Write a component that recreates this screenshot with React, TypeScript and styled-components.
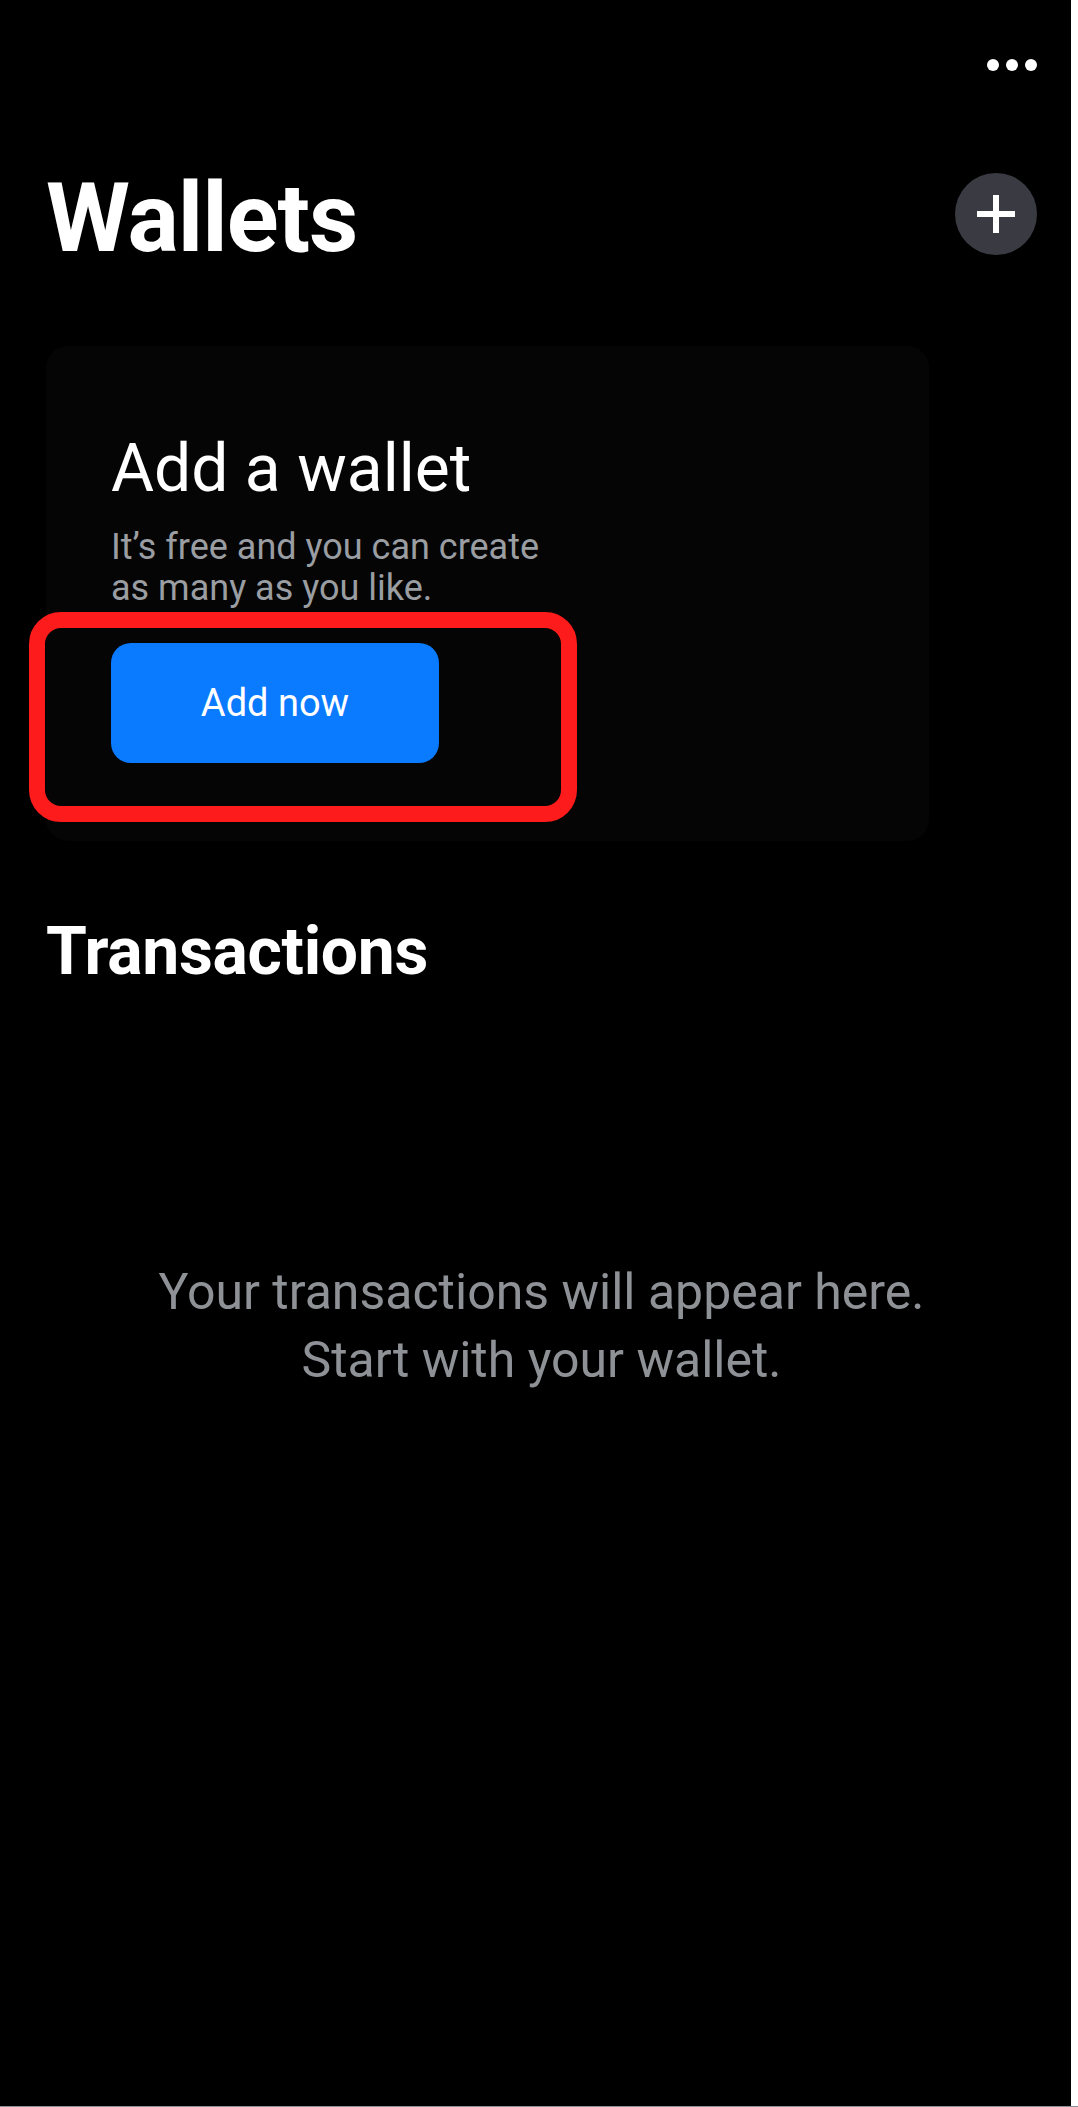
import React from "react";
import styled, { createGlobalStyle } from "styled-components";

const GlobalStyle = createGlobalStyle`
  html, body {
    margin: 0;
    padding: 0;
    background: #ffffff;
  }
  * { box-sizing: border-box; }
  body {
    font-family: Roboto, "Liberation Sans", Arial, sans-serif;
    -webkit-font-smoothing: antialiased;
  }
`;

const Frame = styled.div`
  display: flex;
  width: 1078px;
  border-bottom: 1px solid #8c9197;
`;

const Screen = styled.main`
  width: 1071px;
  min-height: 2106px;
  background: #000000;
  color: #ffffff;
  padding: 0 34px 0 46px;
  display: flex;
  flex-direction: column;
`;

const Side = styled.div`
  flex: 1;
  background: #ffffff;
`;

const TopBar = styled.div`
  height: 130px;
  display: flex;
  align-items: center;
  justify-content: flex-end;
`;

const MoreButton = styled.button`
  background: none;
  border: 0;
  padding: 0;
  display: flex;
  gap: 7px;
  cursor: pointer;
`;

const Dot = styled.span`
  width: 12px;
  height: 12px;
  border-radius: 50%;
  background: #ffffff;
`;

const HeaderRow = styled.div`
  margin-top: 40px;
  display: flex;
  align-items: flex-start;
  justify-content: space-between;
`;

const PageTitle = styled.h1`
  margin: 0;
  font-size: 96px;
  line-height: 96px;
  font-weight: 700;
  letter-spacing: -1px;
`;

const AddCircle = styled.button`
  margin-top: 3px;
  width: 82px;
  height: 82px;
  border-radius: 50%;
  border: 0;
  background: #3a3b42;
  display: flex;
  align-items: center;
  justify-content: center;
  padding: 0;
  cursor: pointer;
`;

const Card = styled.section`
  margin-top: 80px;
  width: 883px;
  background: #050505;
  border-radius: 22px;
  padding: 83px 0 78px 65px;
  display: flex;
  flex-direction: column;
  align-items: flex-start;
`;

const CardTitle = styled.h2`
  margin: 0;
  font-size: 66px;
  line-height: 80px;
  font-weight: 400;
  color: #ffffff;
`;

const CardText = styled.p`
  margin: 18px 0 0;
  font-size: 36px;
  line-height: 41px;
  color: #9a9da2;
`;

const ButtonArea = styled.div`
  position: relative;
  margin-top: 34px;
`;

const PrimaryButton = styled.button`
  width: 328px;
  height: 120px;
  border: 0;
  border-radius: 20px;
  background: #0a7aff;
  color: #ffffff;
  font-family: Roboto, "Liberation Sans", Arial, sans-serif;
  font-size: 38px;
  font-weight: 400;
  cursor: pointer;
`;

const Highlight = styled.div`
  position: absolute;
  left: -82px;
  top: -31px;
  width: 548px;
  height: 210px;
  border: 16px solid #fe1b1b;
  border-radius: 32px;
  pointer-events: none;
`;

const SectionTitle = styled.h2`
  margin: 71px 0 0;
  font-size: 66px;
  line-height: 79px;
  font-weight: 700;
  letter-spacing: -0.3px;
`;

const EmptyState = styled.p`
  margin: 267px 0 0;
  text-align: center;
  font-size: 50px;
  line-height: 68px;
  color: #8e9196;
`;

export default function App() {
  return (
    <>
      <GlobalStyle />
      <Frame>
        <Screen>
          <TopBar>
            <MoreButton aria-label="More">
              <Dot />
              <Dot />
              <Dot />
            </MoreButton>
          </TopBar>
          <HeaderRow>
            <PageTitle>Wallets</PageTitle>
            <AddCircle aria-label="Add wallet">
              <svg width="38" height="38" viewBox="0 0 38 38">
                <rect x="16" y="0" width="6" height="38" fill="#ffffff" />
                <rect x="0" y="16" width="38" height="6" fill="#ffffff" />
              </svg>
            </AddCircle>
          </HeaderRow>
          <Card>
            <CardTitle>Add a wallet</CardTitle>
            <CardText>
              It’s free and you can create
              <br />
              as many as you like.
            </CardText>
            <ButtonArea>
              <PrimaryButton>Add now</PrimaryButton>
              <Highlight />
            </ButtonArea>
          </Card>
          <SectionTitle>Transactions</SectionTitle>
          <EmptyState>
            Your transactions will appear here.
            <br />
            Start with your wallet.
          </EmptyState>
        </Screen>
        <Side />
      </Frame>
    </>
  );
}
